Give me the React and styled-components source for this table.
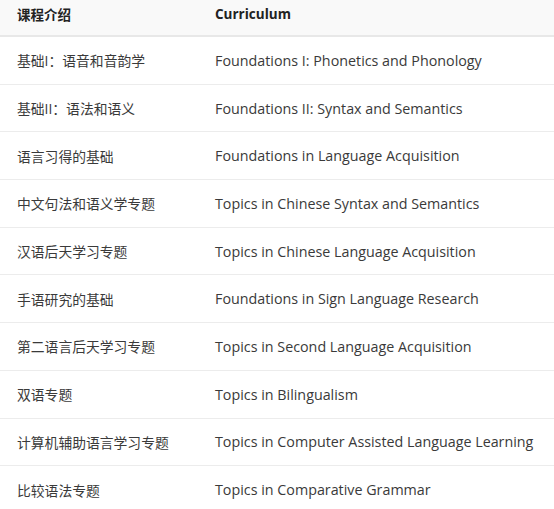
import styled, { createGlobalStyle } from "styled-components";

const GlobalStyle = createGlobalStyle`
  html, body {
    margin: 0;
    padding: 0;
    background: #ffffff;
  }
  body {
    font-family: "Open Sans", "Noto Sans CJK SC", sans-serif;
    color: #333333;
  }
`

const courses = [
    ["基础I：语音和音韵学", "Foundations I: Phonetics and Phonology"],
    ["基础II：语法和语义", "Foundations II: Syntax and Semantics"],
    ["语言习得的基础", "Foundations in Language Acquisition"],
    ["中文句法和语义学专题", "Topics in Chinese Syntax and Semantics"],
    ["汉语后天学习专题", "Topics in Chinese Language Acquisition"],
    ["手语研究的基础", "Foundations in Sign Language Research"],
    ["第二语言后天学习专题", "Topics in Second Language Acquisition"],
    ["双语专题", "Topics in Bilingualism"],
    ["计算机辅助语言学习专题", "Topics in Computer Assisted Language Learning"],
    ["比较语法专题", "Topics in Comparative Grammar"],
];

export default function App() {
    return (
        <>
            <GlobalStyle />
            <Table>
                <Head>
                    <HeadCell>课程介绍</HeadCell>
                    <HeadCell>Curriculum</HeadCell>
                </Head>
                {courses.map(([zh, en], i) => (
                    <Row key={i} $last={i === courses.length - 1}>
                        <Cell>{zh}</Cell>
                        <Cell $en>{en}</Cell>
                    </Row>
                ))}
            </Table>
        </>
    )
}

const Table = styled.div`
    width: 554px;
    display: flex;
    flex-direction: column;
`
const Head = styled.div`
    display: grid;
    grid-template-columns: 198px 1fr;
    box-sizing: border-box;
    height: 37px;
    padding: 0 0 7px 17px;
    align-items: center;
    background: #f9f9f9;
    border-bottom: 2px solid #e8e8e8;
`
const HeadCell = styled.span`
    font-size: 13.5px;
    font-weight: 700;
    color: #222222;
`
const Row = styled.div`
    display: grid;
    grid-template-columns: 198px 1fr;
    height: 46.7px;
    padding-left: 17px;
    align-items: center;
    border-bottom: ${props => props.$last ? "none" : "1px solid #ececec"};
`
const Cell = styled.span`
    font-size: ${props => props.$en ? "14.3px" : "13.8px"};
    color: #3a3a3a;
    white-space: nowrap;
`
